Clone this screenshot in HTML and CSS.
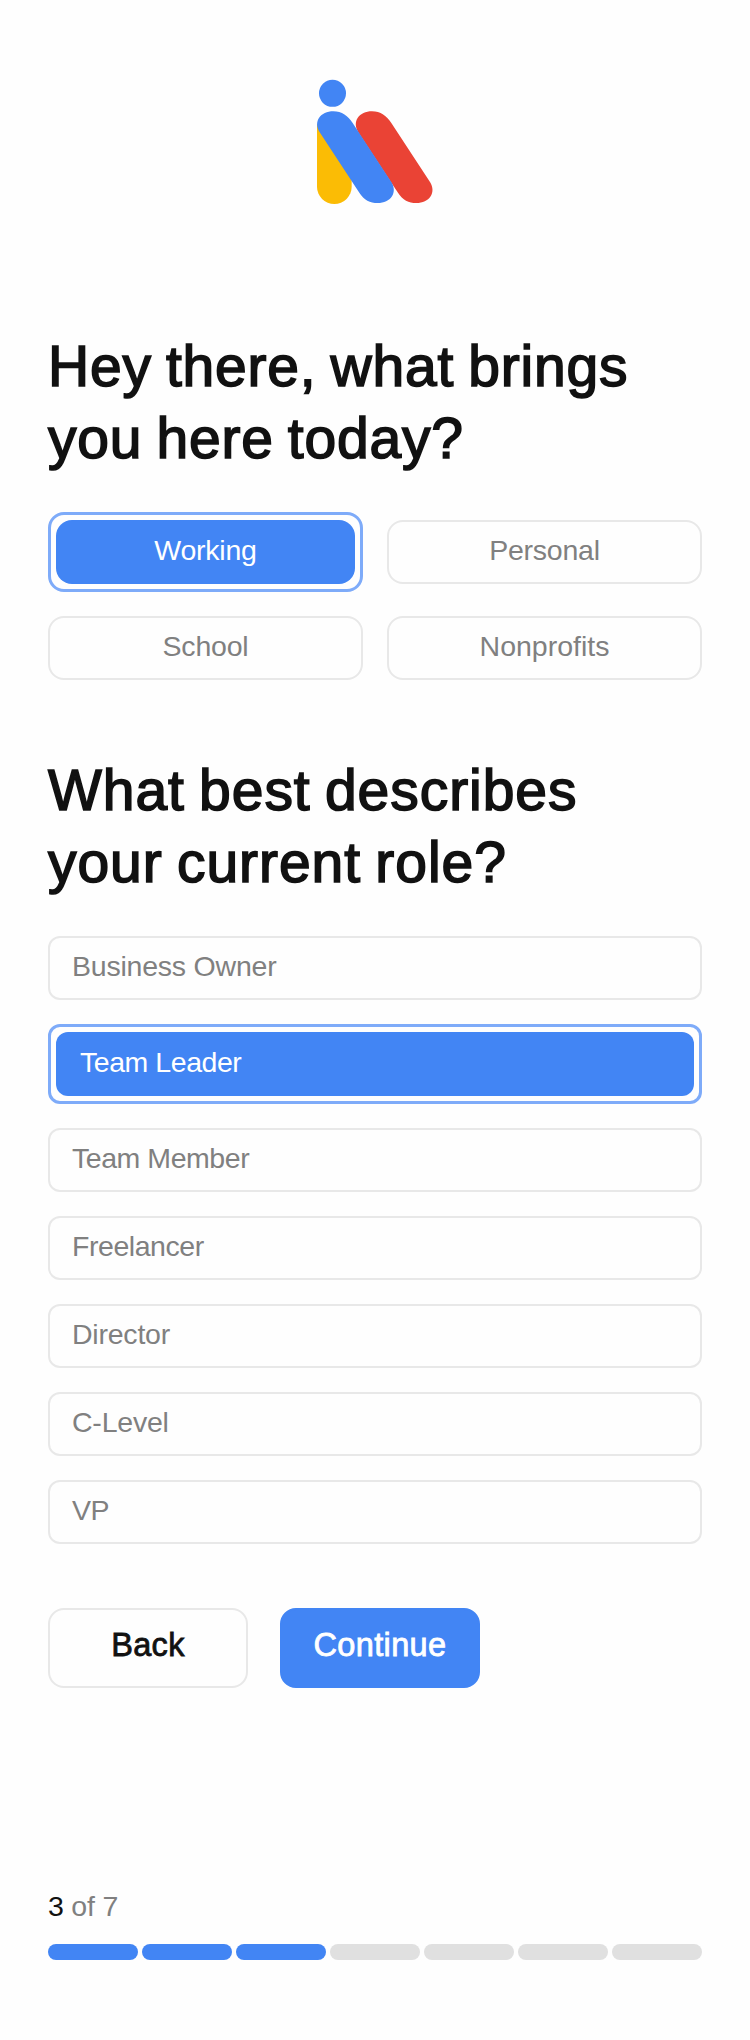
FILE: index.html
```html
<!DOCTYPE html>
<html lang="en">
<head>
<meta charset="utf-8">
<title>Onboarding</title>
<link rel="stylesheet" href="styles.css">
</head>
<body>
<main class="page">
  <svg class="logo" viewBox="0 0 450 435" aria-hidden="true">
    <path fill="#fbbc05" d="M51 160V350a52 52 0 0 0 104 0V300Z"/>
    <path fill="#ea4335" d="M176 188C154 155 178 124 216 124C241 124 261 138 274 159L390 336C410 368 388 399 349 399C326 399 308 390 294 368L270 332L168 177Z"/>
    <path fill="#4285f4" d="M60 188C38 155 62 124 100 124C125 124 145 138 158 159L274 336C294 368 272 399 233 399C210 399 192 390 178 368Z"/>
    <circle fill="#4285f4" cx="97.500" cy="70" r="40.500"/>
  </svg>

  <h1 class="title">Hey there, what brings<br>you here today?</h1>
  <div class="purposes">
    <button class="option selected"><span class="label">Working</span></button>
    <button class="option"><span class="label">Personal</span></button>
    <button class="option"><span class="label">School</span></button>
    <button class="option"><span class="label wide">Nonprofits</span></button>
  </div>

  <h2 class="title title-role">What best describes<br>your current role?</h2>
  <div class="roles">
    <button class="option"><span class="label">Business Owner</span></button>
    <button class="option selected"><span class="label tight">Team Leader</span></button>
    <button class="option"><span class="label tight">Team Member</span></button>
    <button class="option"><span class="label tight">Freelancer</span></button>
    <button class="option"><span class="label">Director</span></button>
    <button class="option"><span class="label">C-Level</span></button>
    <button class="option"><span class="label tight">VP</span></button>
  </div>

  <div class="actions">
    <button class="action">Back</button>
    <button class="action primary">Continue</button>
  </div>

  <footer class="progress">
    <p class="step"><span class="current">3</span> of 7</p>
    <div class="segments">
      <i class="segment done"></i><i class="segment done"></i><i class="segment done"></i>
      <i class="segment"></i><i class="segment"></i><i class="segment"></i><i class="segment"></i>
    </div>
  </footer>
</main>
</body>
</html>
```
FILE: styles.css
```css
* { box-sizing: border-box; }
body {
  margin: 0;
  background: #fefefe;
  font-family: "Liberation Sans", Arial, sans-serif;
  color: #111;
}
.page {
  display: flex;
  flex-direction: column;
  width: 750px;
  height: 2040px;
  padding: 70px 48px 80px;
}
.logo { width: 150px; height: 145px; margin-left: 252px; }
.title {
  margin: 115px 0 0;
  font-size: 57px;
  line-height: 72px;
  font-weight: 400;
  letter-spacing: 0.8px;
  word-spacing: -2.5px;
  white-space: nowrap;
  -webkit-text-stroke: 1.6px #111;
}
.title-role { margin-top: 74px; letter-spacing: 0.95px; }
button { margin: 0; font-family: inherit; }
.purposes {
  display: grid;
  grid-template-columns: 1fr 1fr;
  align-items: center;
  gap: 24px;
  margin-top: 38px;
  grid-template-rows: 80px 64px;
}
.option {
  display: block;
  width: 100%;
  height: 64px;
  padding: 0;
  border: 2px solid #e8e8e8;
  border-radius: 16px;
  background: #fefefe;
  color: #808080;
  font-size: 28.5px;
  line-height: 56px;
  letter-spacing: -0.22px;
}
.label { display: block; height: 60px; }
.tight { letter-spacing: -0.45px; }
.wide { letter-spacing: 0; }
.selected {
  height: 80px;
  padding: 5px;
  border: 3px solid #7eabf9;
  color: #fff;
}
.selected .label {
  height: 64px;
  padding-top: 2px;
  border-radius: 16px;
  background: #4285f4;
}
.roles {
  display: flex;
  flex-direction: column;
  gap: 24px;
  margin-top: 38px;
}
.roles .option { border-radius: 12px; text-align: left; }
.roles .label { padding-left: 22px; }
.roles .selected .label { padding-left: 24px; border-radius: 12px; }
.actions { display: flex; gap: 32px; margin-top: 64px; }
.action {
  width: 200px;
  height: 80px;
  padding: 0 0 6px;
  border: 2px solid #e8e8e8;
  border-radius: 16px;
  background: #fefefe;
  color: #111;
  font-size: 32.5px;
  line-height: 70px;
  letter-spacing: 0.35px;
  -webkit-text-stroke: 0.8px currentColor;
}
.primary { border-color: #4285f4; background: #4285f4; color: #fff; }
.progress { margin-top: auto; }
.step {
  margin: 0 0 18px;
  color: #808080;
  font-size: 28.5px;
  line-height: 40px;
  letter-spacing: -0.2px;
}
.current { color: #111; }
.segments { display: flex; gap: 4px; }
.segment { flex: 1; height: 16px; border-radius: 8px; background: #e0e0e0; }
.done { background: #4285f4; }
```
